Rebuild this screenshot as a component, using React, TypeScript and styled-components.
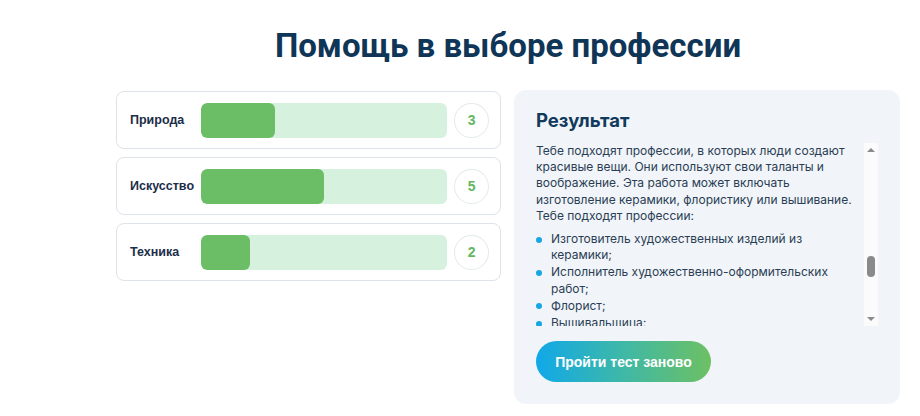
import React from "react";
import styled, { createGlobalStyle } from "styled-components";

const Global = createGlobalStyle`
  html, body { margin: 0; padding: 0; background: #ffffff; }
  body { font-family: "Noto Sans", "Liberation Sans", sans-serif; }
  * { box-sizing: border-box; }
`;

const Page = styled.div`
  width: 920px;
  height: 416px;
  overflow: hidden;
  padding: 24px 0 0 116px;
`;

const Container = styled.div`
  width: 784px;
`;

const Title = styled.h1`
  margin: 0 0 22px;
  text-align: center;
  font-family: "Roboto", "Liberation Sans", sans-serif;
  font-weight: 700;
  font-size: 33px;
  line-height: 44px;
  color: #0f3557;
`;

const Columns = styled.div`
  display: flex;
  gap: 13px;
  align-items: flex-start;
`;

const Scales = styled.div`
  width: 385px;
  display: flex;
  flex-direction: column;
  gap: 8px;
  margin-top: 1px;
`;

const ScaleCard = styled.div`
  height: 58px;
  border: 1px solid #dde3e8;
  border-radius: 8px;
  background: #fff;
  display: flex;
  align-items: center;
  padding: 0 11px 0 13px;
`;

const Label = styled.div`
  width: 71px;
  font-family: "Liberation Sans", Arial, sans-serif;
  font-weight: 700;
  font-size: 12.5px;
  color: #1b2d48;
`;

const Track = styled.div`
  width: 248px;
  height: 35px;
  border-radius: 6px;
  background: #d6f2df;
  overflow: hidden;
`;

const Fill = styled.div`
  height: 100%;
  background: #6bbe66;
  border-radius: 6px;
`;

const Count = styled.div`
  margin-left: 7px;
  width: 35px;
  height: 35px;
  border-radius: 50%;
  border: 1px solid #e3ece6;
  display: flex;
  align-items: center;
  justify-content: center;
  font-family: "Liberation Sans", Arial, sans-serif;
  font-weight: 700;
  font-size: 14px;
  color: #62b75f;
`;

const Result = styled.div`
  width: 386px;
  height: 314px;
  background: #f1f5f9;
  border-radius: 12px;
  padding: 17px 22px 22px 22px;
  display: flex;
  flex-direction: column;
`;

const ResultTitle = styled.h2`
  margin: 0 0 10px;
  font-family: "Inter", "Noto Sans", sans-serif;
  font-weight: 700;
  font-size: 18.5px;
  line-height: 26px;
  color: #123a5c;
`;

const ScrollWrap = styled.div`
  position: relative;
  height: 183px;
`;

const Scroll = styled.div`
  height: 100%;
  overflow-y: scroll;
  scrollbar-width: none;
  padding-right: 20px;
  font-size: 12px;
  line-height: 16.2px;
  color: #2b3d54;
  font-family: "Inter", "Noto Sans", sans-serif;
  &::-webkit-scrollbar { display: none; }
`;

const Bar = styled.div`
  position: absolute;
  top: 0;
  right: 0;
  bottom: 0;
  width: 14px;
  background: #fbfbfb;
`;

const Arrow = styled.div<{ $down?: boolean }>`
  position: absolute;
  left: 3px;
  ${(p) => (p.$down ? "bottom: 5px;" : "top: 5px;")}
  width: 0;
  height: 0;
  border-left: 4px solid transparent;
  border-right: 4px solid transparent;
  ${(p) =>
    p.$down ? "border-top: 4px solid #8a8a8a;" : "border-bottom: 4px solid #8a8a8a;"}
`;

const Thumb = styled.div`
  position: absolute;
  left: 3px;
  top: 113px;
  width: 8px;
  height: 21px;
  border-radius: 4px;
  background: #8a8a8a;
`;

const Para = styled.p`
  margin: 0 0 7px;
`;

const List = styled.ul`
  margin: 0;
  padding: 0;
  list-style: none;
`;

const Item = styled.li`
  position: relative;
  padding-left: 15px;
  margin-bottom: 1px;
  &::before {
    content: "";
    position: absolute;
    left: 0;
    top: 5.5px;
    width: 6px;
    height: 6px;
    border-radius: 50%;
    background: #18a5e3;
  }
`;

const Button = styled.button`
  margin-top: 15px;
  align-self: flex-start;
  width: 175px;
  height: 41px;
  border: none;
  border-radius: 21px;
  background: linear-gradient(90deg, #10a8e8 0%, #3fb8a6 50%, #6dc063 100%);
  color: #fff;
  font-family: "Liberation Sans", Arial, sans-serif;
  font-weight: 700;
  font-size: 14px;
  cursor: pointer;
`;

const scales = [
  { name: "Природа", value: 3 },
  { name: "Искусство", value: 5 },
  { name: "Техника", value: 2 },
];

const items = [
  "Изготовитель художественных изделий из керамики;",
  "Исполнитель художественно-оформительских работ;",
  "Флорист;",
  "Вышивальщица;",
];

export default function App() {
  return (
    <Page>
      <Global />
      <Container>
        <Title>Помощь в выборе профессии</Title>
        <Columns>
          <Scales>
            {scales.map((s) => (
              <ScaleCard key={s.name}>
                <Label>{s.name}</Label>
                <Track>
                  <Fill style={{ width: `${s.value * 10}%` }} />
                </Track>
                <Count>{s.value}</Count>
              </ScaleCard>
            ))}
          </Scales>
          <Result>
            <ResultTitle>Результат</ResultTitle>
            <ScrollWrap>
              <Scroll>
                <Para>
                  Тебе подходят профессии, в которых люди создают красивые вещи. Они используют свои таланты и воображение. Эта работа может включать изготовление керамики, флористику или вышивание. Тебе подходят профессии:
                </Para>
                <List>
                  {items.map((t) => (
                    <Item key={t}>{t}</Item>
                  ))}
                </List>
              </Scroll>
              <Bar>
                <Arrow />
                <Thumb />
                <Arrow $down />
              </Bar>
            </ScrollWrap>
            <Button>Пройти тест заново</Button>
          </Result>
        </Columns>
      </Container>
    </Page>
  );
}
